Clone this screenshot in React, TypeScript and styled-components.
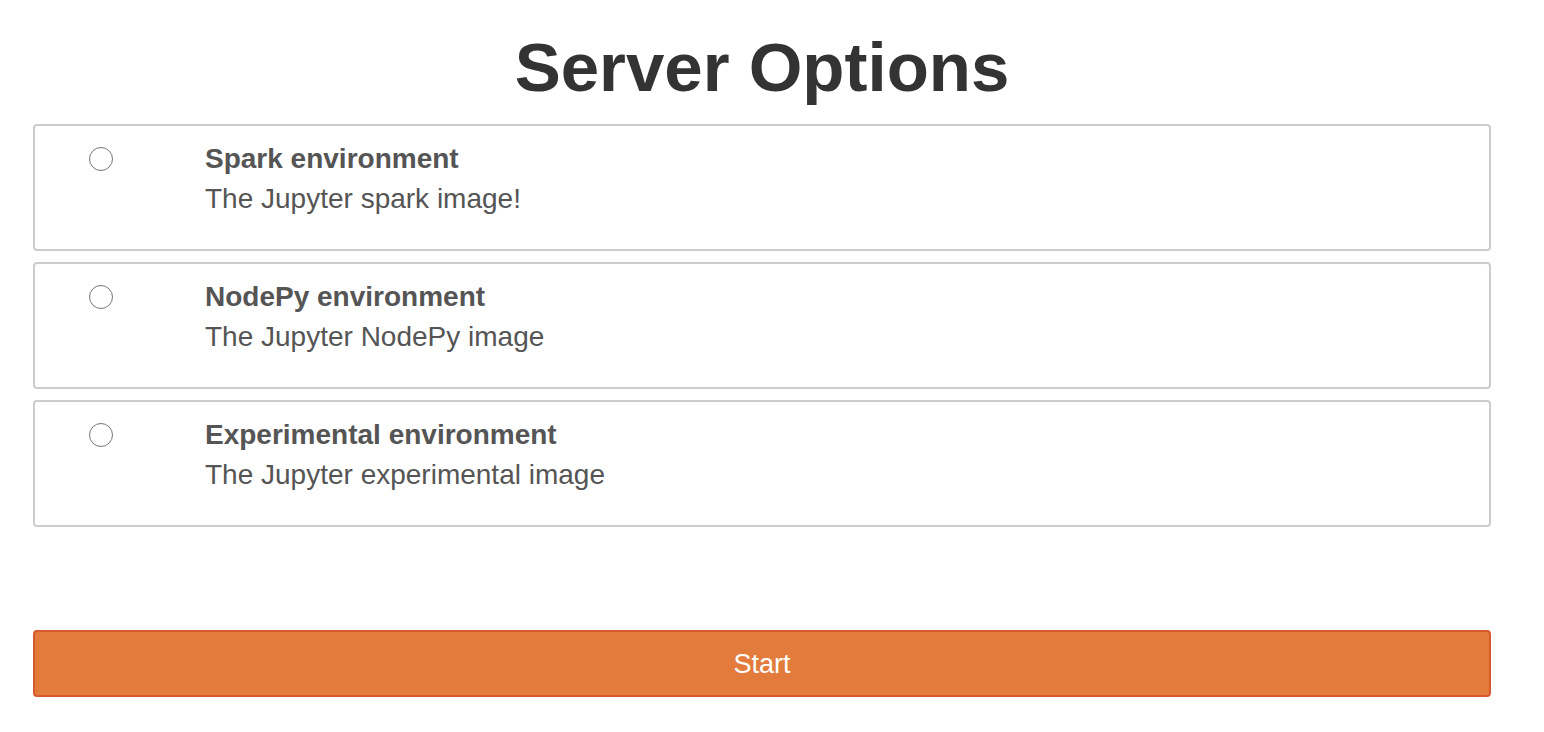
import styled, { createGlobalStyle } from "styled-components";

const GlobalStyle = createGlobalStyle`
  html, body {
    margin: 0;
    padding: 0;
    background: #ffffff;
  }
  body {
    font-family: "Liberation Sans", Arial, Helvetica, sans-serif;
    color: #555555;
  }
`;

const Page = styled.div`
  width: 1458px;
  margin-left: 33px;
  display: flex;
  flex-direction: column;
`;

const Heading = styled.h1`
  margin: 29px 0 17px;
  font-size: 69px;
  font-weight: 700;
  line-height: 78px;
  color: #333333;
  text-align: center;
`;

const OptionList = styled.div`
  display: flex;
  flex-direction: column;
  gap: 11px;
`;

const OptionCard = styled.label`
  display: grid;
  grid-template-columns: 170px 1fr;
  padding: 13px 0 10px;
  border: 2px solid #cccccc;
  border-radius: 4px;
  cursor: pointer;
`;

const RadioCell = styled.div`
  height: 40px;
  display: flex;
  align-items: center;
  padding-left: 54px;
`;

const Radio = styled.input`
  appearance: none;
  margin: 0;
  width: 24px;
  height: 24px;
  border: 1.5px solid #767676;
  border-radius: 50%;
  background: #ffffff;
  cursor: pointer;

  &:checked {
    border: 7px solid #0075ff;
  }
`;

const OptionText = styled.div`
  display: flex;
  flex-direction: column;
`;

const OptionTitle = styled.strong`
  font-size: 28px;
  line-height: 40px;
  font-weight: 700;
  color: #555555;
`;

const OptionDesc = styled.p`
  margin: 0 0 20px;
  font-size: 28px;
  line-height: 40px;
  color: #555555;
`;

const StartButton = styled.button`
  margin-top: 103px;
  height: 67px;
  width: 100%;
  border: 2px solid #d65a2c;
  border-radius: 4px;
  background: #e27b3b;
  color: #ffffff;
  font-family: "Liberation Sans", Arial, Helvetica, sans-serif;
  font-size: 27px;
  line-height: 40px;
  cursor: pointer;
`;

const options = [
  { id: "spark", title: "Spark environment", desc: "The Jupyter spark image!" },
  { id: "nodepy", title: "NodePy environment", desc: "The Jupyter NodePy image" },
  {
    id: "experimental",
    title: "Experimental environment",
    desc: "The Jupyter experimental image",
  },
];

export default function App() {
  return (
    <>
      <GlobalStyle />
      <Page>
        <Heading>Server Options</Heading>
        <OptionList>
          {options.map((o) => (
            <OptionCard key={o.id}>
              <RadioCell>
                <Radio type="radio" name="profile" value={o.id} />
              </RadioCell>
              <OptionText>
                <OptionTitle>{o.title}</OptionTitle>
                <OptionDesc>{o.desc}</OptionDesc>
              </OptionText>
            </OptionCard>
          ))}
        </OptionList>
        <StartButton type="submit">Start</StartButton>
      </Page>
    </>
  );
}
